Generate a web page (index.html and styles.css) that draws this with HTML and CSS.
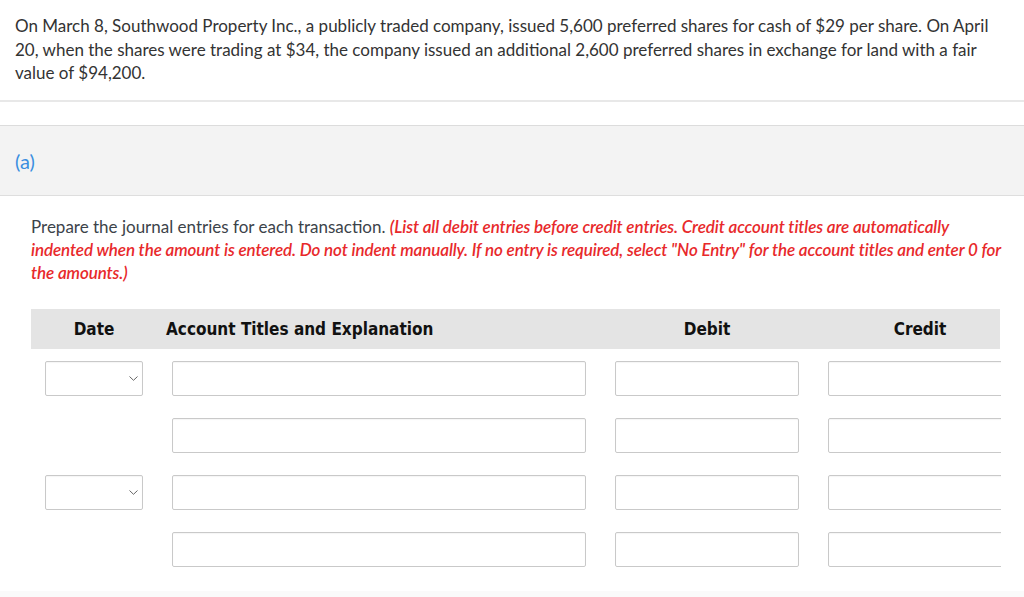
FILE: index.html
```html
<!DOCTYPE html>
<html>
<head>
<meta charset="utf-8">
<link rel="stylesheet" href="styles.css">
</head>
<body>
<div class="problem">On March 8, Southwood Property Inc., a publicly traded company, issued 5,600 preferred shares for cash of $29 per share. On April 20, when the shares were trading at $34, the company issued an additional 2,600 preferred shares in exchange for land with a fair value of $94,200.</div>
<div class="spacer"></div>
<div class="part-head"><span class="part-label">(a)</span></div>
<div class="part-body">
  <p class="instructions">Prepare the journal entries for each transaction. <em class="note">(List all debit entries before credit entries. Credit account titles are automatically indented when the amount is entered. Do not indent manually. If no entry is required, select "No Entry" for the account titles and enter 0 for the amounts.)</em></p>
  <div class="journal">
    <div class="jrow jhead">
      <div class="hc hc-date">Date</div>
      <div class="hc hc-acct">Account Titles and Explanation</div>
      <div class="hc hc-amt">Debit</div>
      <div class="hc hc-amt">Credit</div>
    </div>
    <div class="jbody">
      <div class="jrow">
        <div class="field select"><svg class="chev" width="9" height="5" viewBox="0 0 9 5"><path d="M0.5 0.5 L4.5 4.3 L8.5 0.5" fill="none" stroke="#666" stroke-width="1"/></svg></div>
        <div class="field"></div><div class="field"></div><div class="field"></div>
      </div>
      <div class="jrow">
        <div></div>
        <div class="field"></div><div class="field"></div><div class="field"></div>
      </div>
      <div class="jrow">
        <div class="field select"><svg class="chev" width="9" height="5" viewBox="0 0 9 5"><path d="M0.5 0.5 L4.5 4.3 L8.5 0.5" fill="none" stroke="#666" stroke-width="1"/></svg></div>
        <div class="field"></div><div class="field"></div><div class="field"></div>
      </div>
      <div class="jrow">
        <div></div>
        <div class="field"></div><div class="field"></div><div class="field"></div>
      </div>
    </div>
  </div>
</div>
<div class="footer"></div>
</body>
</html>
```
FILE: styles.css
```css
html, body {
  margin: 0;
  padding: 0;
  background: #fff;
}
body {
  font-family: Lato, "Open Sans", sans-serif;
  color: #333;
  overflow: hidden;
  height: 597px;
}
.problem {
  font-size: 17px;
  line-height: 23.5px;
  padding: 14px 25px 15px 15px;
  border-bottom: 2px solid #e8e8e8;
}
.spacer {
  height: 23px;
  border-bottom: 1px solid #dcdcdc;
}
.part-head {
  background: #f3f3f3;
  height: 69px;
  border-bottom: 1px solid #dedede;
  display: flex;
  align-items: center;
  padding-left: 15px;
}
.part-label {
  color: #3a8ee0;
  font-size: 20px;
  margin-top: 2px;
}
.part-body {
  padding: 19px 23px 0 31px;
}
.instructions {
  margin: 0;
  font-size: 17px;
  line-height: 23px;
  color: #3c434a;
}
.note {
  color: #e8292b;
  font-style: italic;
  font-weight: 600;
  letter-spacing: -0.1px;
}
.journal {
  margin-top: 25px;
  width: 970px;
  overflow: hidden;
}
.jrow {
  display: grid;
  grid-template-columns: 98px 414px 184px 184px;
  column-gap: 29px;
  padding-left: 14px;
}
.jhead {
  background: #e4e4e4;
  height: 40px;
  width: 955px;
  align-items: center;
}
.hc {
  font-family: "DejaVu Sans", Verdana, sans-serif;
  font-stretch: condensed;
  font-weight: bold;
  font-size: 17px;
  color: #111;
}
.hc-date, .hc-amt {
  text-align: center;
}
.hc-acct {
  margin-left: -6px;
}
.jbody {
  padding-top: 12px;
  display: flex;
  flex-direction: column;
  gap: 22px;
}
.field {
  height: 35px;
  box-sizing: border-box;
  border: 1px solid #c9c9c9;
  border-radius: 2px;
  box-shadow: inset 0 1px 1px rgba(0,0,0,0.04);
  background: #fff;
}
.select {
  display: flex;
  align-items: center;
  justify-content: flex-end;
  padding-right: 4px;
}
.chev {
  display: block;
}
.footer {
  position: absolute;
  left: 0;
  right: 0;
  top: 591px;
  height: 6px;
  background: #fafafa;
}
```
